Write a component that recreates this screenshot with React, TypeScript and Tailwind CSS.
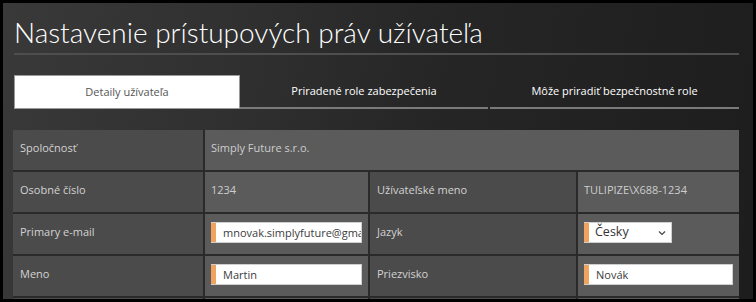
import React from "react";

const font = { fontFamily: '"Open Sans", "Noto Sans", sans-serif' };

const Field = ({ value, w }: { value: string; w: string }) => (
  <div className={`flex h-[21px] ${w} items-center overflow-hidden border border-[#cfcfcf] border-l-0 bg-white`}>
    <div className="h-full w-[5px] shrink-0 bg-[#eea35e]" />
    <input
      readOnly
      value={value}
      className="h-full min-w-0 flex-1 bg-transparent pl-[7px] text-[11px] text-[#3c3c3c] outline-none"
      style={font}
    />
  </div>
);

const Label = ({ children }: { children?: React.ReactNode }) => (
  <div className="flex items-center bg-[#4b4b4b] px-[7px] pb-[3px] text-[11px] text-[#d2d2d2]">{children}</div>
);

const Value = ({ children, className = "" }: { children?: React.ReactNode; className?: string }) => (
  <div className={`flex items-center bg-[#5b5b5b] px-[6px] pb-[3px] text-[11px] text-[#cdcdcd] ${className}`}>{children}</div>
);

export default function App() {
  return (
    <div className="h-[302px] w-[756px] bg-black p-[3px]" style={font}>
      <div className="h-full overflow-hidden bg-[linear-gradient(100deg,#393939_0%,#303030_30%,#262626_55%,#1d1d1d_100%)] pl-[10px] pr-[14px]">
        {/* Title */}
        <h1 className="pl-[1px] pt-[11px] font-['Lato',sans-serif] text-[28px] font-light leading-[36px] text-white">
          Nastavenie prístupových práv užívateľa
        </h1>
        <div className="ml-[1px] mt-[3px] h-[2px] bg-[#4e4e4e]" />

        {/* Tabs */}
        <div className="ml-[1px] mt-[20px] flex h-[34px] text-[11px]">
          <div className="flex w-[226px] items-center justify-center border border-[#9a9a9a] bg-white text-[#555]">
            Detaily užívateľa
          </div>
          <div className="flex w-[248px] items-center justify-center border-b-2 border-[#7a7a7a] text-white">
            Priradené role zabezpečenia
          </div>
          <div className="ml-[2px] flex flex-1 items-center justify-center border-b-2 border-[#7a7a7a] text-white">
            Môže priradiť bezpečnostné role
          </div>
        </div>

        {/* Details table */}
        <div className="mt-[21px] grid grid-cols-[190px_163px_206px_161px] auto-rows-[40px] gap-[2px] bg-[#2a2a2a]">
          <Label>Spoločnosť</Label>
          <Value className="col-span-3">Simply Future s.r.o.</Value>

          <Label>Osobné číslo</Label>
          <Value>1234</Value>
          <Label>Užívateľské meno</Label>
          <Value>TULIPIZE\X688-1234</Value>

          <Label>Primary e-mail</Label>
          <Value>
            <Field value="mnovak.simplyfuture@gmail.com" w="w-[152px]" />
          </Value>
          <Label>Jazyk</Label>
          <Value>
            <div className="flex h-[21px] w-[88px] items-center border border-[#cfcfcf] border-l-0 bg-white">
              <div className="h-full w-[5px] shrink-0 bg-[#eea35e]" />
              <span className="flex-1 pl-[6px] text-[12.5px] text-[#333]">Česky</span>
              <svg width="10" height="10" viewBox="0 0 10 10" className="mr-[4px]">
                <path d="M2 3.5 L5 6.5 L8 3.5" fill="none" stroke="#444" strokeWidth="1.2" />
              </svg>
            </div>
          </Value>

          <Label>Meno</Label>
          <Value>
            <Field value="Martin" w="w-[152px]" />
          </Value>
          <Label>Priezvisko</Label>
          <Value>
            <Field value="Novák" w="w-[149px]" />
          </Value>

          <Label />
          <Value />
          <Label />
          <Value />
        </div>
      </div>
    </div>
  );
}
